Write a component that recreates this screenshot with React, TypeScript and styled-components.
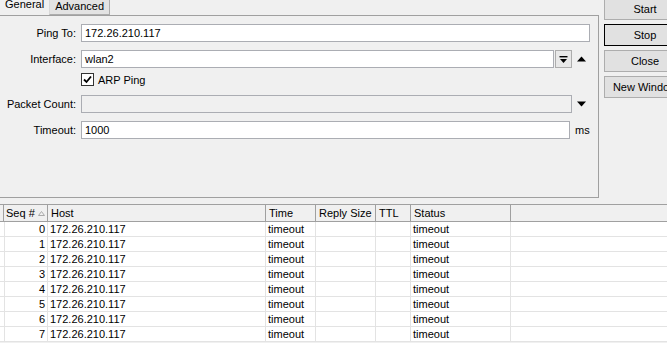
import styled, { createGlobalStyle } from 'styled-components';

const Global = createGlobalStyle`
    html, body {
        margin: 0;
        padding: 0;
        background: #f0f0f0;
        overflow: hidden;
    }
    body {
        width: 667px;
        height: 343px;
        font-family: "Liberation Sans", Arial, sans-serif;
        font-size: 11px;
        color: #000;
    }
`;

const Window = styled.div`
    width: 667px;
    height: 343px;
    display: flex;
    flex-direction: column;
    overflow: hidden;
`;

const Top = styled.div`
    display: flex;
    height: 198px;
`;

const TabArea = styled.div`
    width: 599px;
    flex-shrink: 0;
    display: flex;
    flex-direction: column;
`;

const Tabs = styled.div`
    display: flex;
    height: 15px;
`;

const Tab = styled.div<{ $active?: boolean }>`
    box-sizing: border-box;
    height: ${p => (p.$active ? '16px' : '15px')};
    padding: ${p => (p.$active ? '0 4px 0 5px' : '0 5px')};
    line-height: 13px;
    background: ${p => (p.$active ? '#f0f0f0' : '#e3e3e3')};
    border: 1px solid ${p => (p.$active ? '#f0f0f0' : '#adadad')};
    border-top: none;
    border-left: ${p => (p.$active ? 'none' : '1px solid #d9d9d9')};
    position: relative;
    z-index: ${p => (p.$active ? 1 : 0)};
    margin-top: ${p => (p.$active ? '-2px' : '0')};
`;

const Panel = styled.div`
    flex: 1;
    box-sizing: border-box;
    border: 1px solid #a0a0a0;
    border-left: none;
    padding-top: 8px;
    display: flex;
    flex-direction: column;
`;

const FormRow = styled.div<{ $gap: number; $h?: number }>`
    display: flex;
    align-items: center;
    height: ${p => p.$h ?? 18}px;
    margin-top: ${p => p.$gap}px;
`;

const Label = styled.div`
    width: 76px;
    text-align: right;
    margin-right: 5px;
    color: #000;
    white-space: nowrap;
`;

const Input = styled.div<{ $w: number; $disabled?: boolean }>`
    box-sizing: border-box;
    width: ${p => p.$w}px;
    height: 18px;
    border: 1px solid #abadb3;
    background: ${p => (p.$disabled ? '#f0f0f0' : '#fff')};
    padding-left: 3px;
    line-height: 16px;
`;

const DropBtn = styled.div`
    box-sizing: border-box;
    width: 17px;
    height: 18px;
    margin-left: 1px;
    border: 1px solid #adadad;
    background: #e8e8e8;
    display: flex;
    align-items: center;
    justify-content: center;
`;

const Arrow = styled.div`
    width: 18px;
    display: flex;
    justify-content: center;
`;

const Unit = styled.span`
    margin-left: 5px;
`;

const Check = styled.div`
    margin-left: 81px;
    display: flex;
    align-items: center;
    gap: 4px;
`;

const Box = styled.div`
    box-sizing: border-box;
    width: 13px;
    height: 13px;
    border: 1px solid #333;
    background: #fff;
    display: flex;
    align-items: center;
    justify-content: center;
`;

const Buttons = styled.div`
    flex-shrink: 0;
    margin-left: 5px;
    margin-top: -2px;
    display: flex;
    flex-direction: column;
    gap: 4px;
`;

const Button = styled.div<{ $focus?: boolean }>`
    box-sizing: border-box;
    width: 82px;
    height: 22px;
    background: #e1e1e1;
    border: 1px solid ${p => (p.$focus ? '#000' : '#adadad')};
    text-align: center;
    line-height: 20px;
    white-space: nowrap;
`;

const Table = styled.div`
    margin-top: 6px;
    border-top: 1px solid #a0a0a0;
    display: flex;
    flex-direction: column;
`;

const cols = '3px 45px 218px 50px 60px 35px 100px 1fr';

const HeadRow = styled.div`
    display: grid;
    grid-template-columns: ${cols};
    height: 17px;
    box-sizing: border-box;
    border-bottom: 1px solid #a0a0a0;
    background: #f0f0f0;
`;

const HeadCell = styled.div`
    box-sizing: border-box;
    border-right: 1px solid #a0a0a0;
    padding-left: 3px;
    line-height: 16px;
    white-space: nowrap;
    display: flex;
    align-items: center;
    gap: 3px;
    &:last-child {
        border-right: none;
    }
`;

const Row = styled.div`
    display: grid;
    grid-template-columns: ${cols};
    height: 15px;
    box-sizing: border-box;
    border-bottom: 1px solid #e3e3e3;
    background: #fff;
`;

const Cell = styled.div<{ $right?: boolean }>`
    box-sizing: border-box;
    border-right: 1px solid #e3e3e3;
    padding: 0 2px 0 2px;
    line-height: 14px;
    text-align: ${p => (p.$right ? 'right' : 'left')};
    white-space: nowrap;
    overflow: hidden;
    &:last-child {
        border-right: none;
    }
`;

const rows = [0, 1, 2, 3, 4, 5, 6, 7];

const UpTri = () => (
    <svg width="9" height="6" viewBox="0 0 9 6"><path d="M0 5.5 L4.5 0.5 L9 5.5 Z" fill="#000" /></svg>
);
const DownTri = () => (
    <svg width="9" height="6" viewBox="0 0 9 6"><path d="M0 0.5 L4.5 5.5 L9 0.5 Z" fill="#000" /></svg>
);

const App = () => {
    return (
        <Window>
            <Global />
            <Top>
                <TabArea>
                    <Tabs>
                        <Tab $active>General</Tab>
                        <Tab>Advanced</Tab>
                    </Tabs>
                    <Panel>
                        <FormRow $gap={0}>
                            <Label>Ping To:</Label>
                            <Input $w={509}>172.26.210.117</Input>
                        </FormRow>
                        <FormRow $gap={8}>
                            <Label>Interface:</Label>
                            <Input $w={473}>wlan2</Input>
                            <DropBtn>
                                <svg width="9" height="9" viewBox="0 0 9 9">
                                    <rect x="0.5" y="1" width="8" height="1.4" fill="#000" />
                                    <path d="M1 4 L4.5 8 L8 4 Z" fill="#000" />
                                </svg>
                            </DropBtn>
                            <Arrow><UpTri /></Arrow>
                        </FormRow>
                        <FormRow $gap={5} $h={13}>
                            <Check>
                                <Box>
                                    <svg width="9" height="9" viewBox="0 0 9 9">
                                        <path d="M1 4.5 L3.5 7 L8 1.5" stroke="#000" strokeWidth="1.8" fill="none" />
                                    </svg>
                                </Box>
                                ARP Ping
                            </Check>
                        </FormRow>
                        <FormRow $gap={9}>
                            <Label>Packet Count:</Label>
                            <Input $w={491} $disabled />
                            <Arrow><DownTri /></Arrow>
                        </FormRow>
                        <FormRow $gap={8}>
                            <Label>Timeout:</Label>
                            <Input $w={489}>1000</Input>
                            <Unit>ms</Unit>
                        </FormRow>
                    </Panel>
                </TabArea>
                <Buttons>
                    <Button>Start</Button>
                    <Button $focus>Stop</Button>
                    <Button>Close</Button>
                    <Button>New Window</Button>
                </Buttons>
            </Top>
            <Table>
                <HeadRow>
                    <HeadCell />
                    <HeadCell>
                        Seq #
                        <svg width="7" height="5" viewBox="0 0 7 5"><path d="M0.5 4.5 L3.5 0.5 L6.5 4.5 Z" fill="none" stroke="#aaa" /></svg>
                    </HeadCell>
                    <HeadCell>Host</HeadCell>
                    <HeadCell>Time</HeadCell>
                    <HeadCell>Reply Size</HeadCell>
                    <HeadCell>TTL</HeadCell>
                    <HeadCell>Status</HeadCell>
                    <HeadCell />
                </HeadRow>
                {rows.map(n => (
                    <Row key={n}>
                        <Cell />
                        <Cell $right>{n}</Cell>
                        <Cell>172.26.210.117</Cell>
                        <Cell>timeout</Cell>
                        <Cell />
                        <Cell />
                        <Cell>timeout</Cell>
                        <Cell />
                    </Row>
                ))}
            </Table>
        </Window>
    );
};

export default App;
